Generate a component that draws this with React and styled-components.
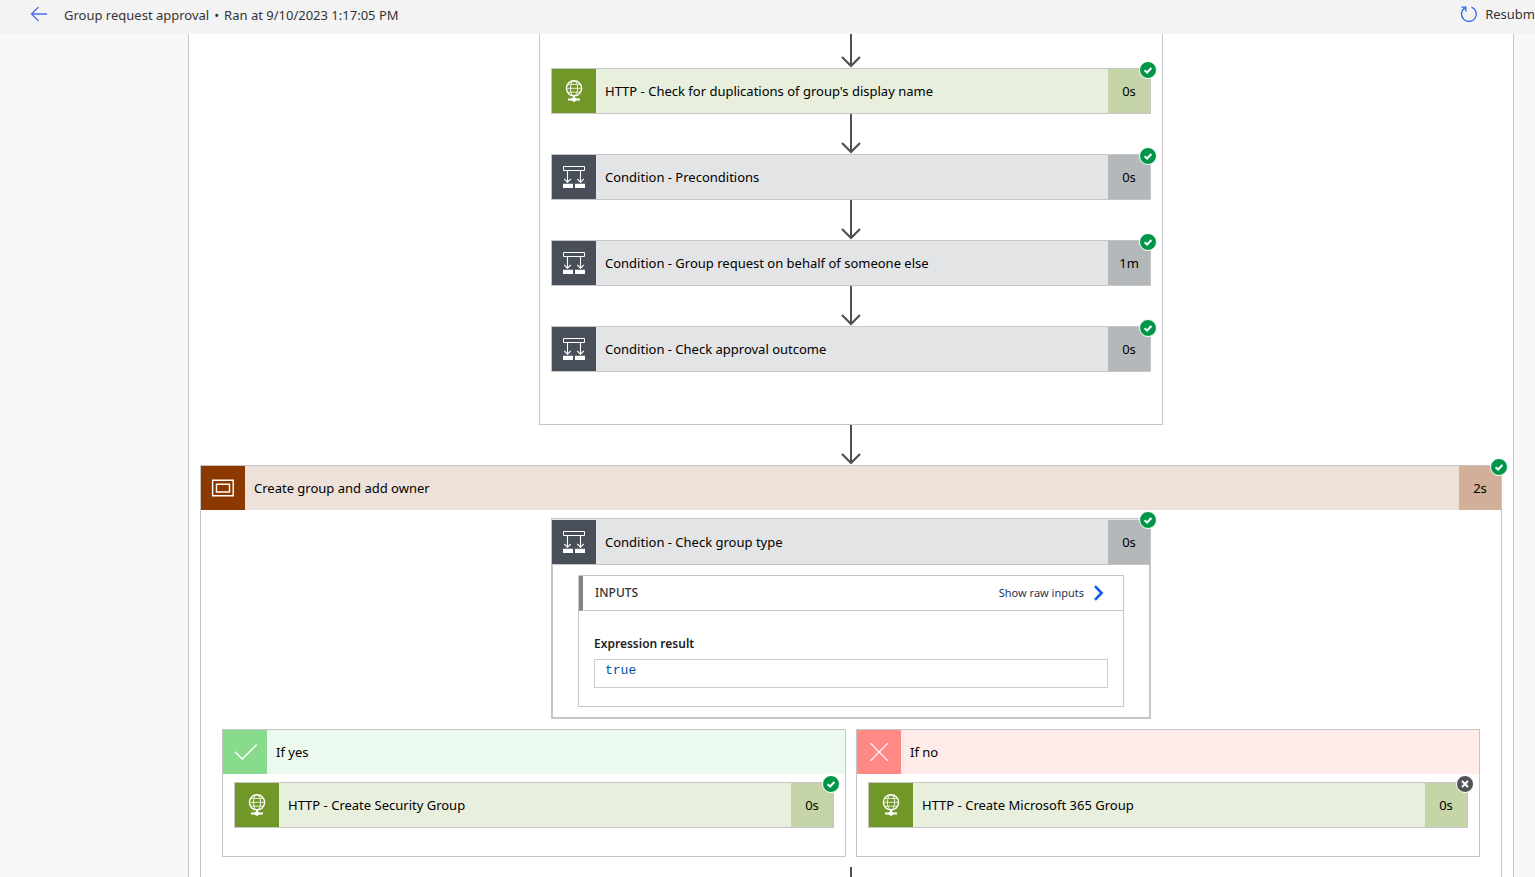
import React from "react";
import styled, { createGlobalStyle } from "styled-components";

const GlobalStyle = createGlobalStyle`
  *, *::before, *::after { box-sizing: border-box; }
  body {
    margin: 0;
    background: #f8f8f8;
    color: #000;
    font: 13px/20px "Noto Sans", "Open Sans", sans-serif;
  }
  button, input { font: inherit; color: inherit; }
`;

const LINE = "#c6c6c6";

const tones = {
  http: { tile: "#709727", bar: "#e8efdd", time: "#c6d5a8" },
  condition: { tile: "#484f58", bar: "#e3e4e6", time: "#b4b8bb" },
  scope: { tile: "#8c3900", bar: "#eee1d9", time: "#d1af98" },
  yes: { tile: "#88da8d", bar: "#ecf9ee" },
  no: { tile: "#ff8984", bar: "#ffecea" },
};

const Page = styled.div`
  display: flex;
  flex-direction: column;
  height: 100vh;
  overflow: hidden;
`;

const TopBar = styled.header`
  flex: none;
  display: flex;
  align-items: center;
  justify-content: space-between;
  height: 34px;
  padding: 0 0 6px 30px;
  background: #f3f3f3;
  color: #333;
`;

const RunInfo = styled.div`
  display: flex;
  align-items: center;
  gap: 16px;
`;

const RunTitle = styled.h1`
  display: flex;
  gap: 5px;
  margin: 0;
  padding-top: 2px;
  font-size: 13px;
  font-weight: 400;
  white-space: nowrap;
`;

const BarButton = styled.button`
  display: flex;
  align-items: center;
  gap: 7px;
  padding: 0;
  border: 0;
  background: none;
`;

const Main = styled.main`
  flex: 1;
  min-height: 0;
  display: flex;
  overflow: hidden;
  padding: 0 21px 0 188px;
`;

const Canvas = styled.div`
  flex: 1;
  display: flex;
  flex-direction: column;
  align-items: center;
  padding: 0 11px;
  border: solid ${LINE};
  border-width: 0 1px;
  background: #fff;
`;

const StepGroup = styled.section`
  flex: none;
  display: flex;
  flex-direction: column;
  align-items: center;
  width: 100%;
  max-width: 624px;
  padding: 0 11px 52px;
  border: solid ${LINE};
  border-width: 0 1px 1px;
`;

const Scope = styled.section`
  position: relative;
  flex: none;
  display: flex;
  flex-direction: column;
  align-items: center;
  width: 100%;
  border: solid ${LINE};
  border-width: 1px 1px 0;
`;

const ScopeBody = styled.div`
  display: flex;
  flex-direction: column;
  align-items: center;
  width: 100%;
  padding: 8px 21px 0;
`;

const Card = styled.article`
  position: relative;
  width: 100%;
  max-width: 600px;
  border: 1px solid ${LINE};
`;

const Head = styled.button`
  display: flex;
  align-items: stretch;
  width: 100%;
  padding: ${(p) => (p.$open ? "1px 0 0" : "0")};
  border: 0;
  background: ${(p) => tones[p.$tone].bar};
  text-align: left;
`;

const Tile = styled.span`
  flex: none;
  display: block;
  width: 44px;
  height: 44px;
  background: ${(p) => tones[p.$tone].tile};

  svg { display: block; }
`;

const Name = styled.span`
  flex: 1;
  align-self: center;
  padding-left: 9px;
`;

const Duration = styled.span`
  display: flex;
  align-items: center;
  justify-content: center;
  width: 42px;
  background: ${(p) => tones[p.$tone].time};
`;

const Badge = styled.span`
  position: absolute;
  top: -8px;
  right: -7px;
  width: 18px;
  height: 18px;
  border: 1px solid #fff;
  border-radius: 50%;
  background: ${(p) => (p.$skipped ? "#505256" : "#009647")};

  svg { display: block; }
`;

const CardBody = styled.div`
  padding: 10px 25px;
  border: 1px solid ${LINE};
  background: #fff;
`;

const Panel = styled.section`
  border: 1px solid ${LINE};
`;

const PanelHead = styled.div`
  display: flex;
  align-items: center;
  justify-content: space-between;
  height: 35px;
  padding: 0 18px 0 12px;
  border-left: 4px solid #7f8388;
  border-bottom: 1px solid ${LINE};
`;

const PanelTitle = styled.h2`
  margin: 0;
  color: #333;
  font-size: 12px;
  font-weight: 500;
`;

const RawLink = styled.a`
  display: flex;
  align-items: center;
  gap: 9px;
  color: #1f3152;
  font-size: 11px;
  text-decoration: none;
`;

const Field = styled.div`
  display: flex;
  flex-direction: column;
  gap: 5px;
  padding: 23px 15px 18px;
`;

const FieldLabel = styled.label`
  color: #222;
  font-size: 12px;
  font-weight: 600;
`;

const FieldValue = styled.input`
  width: 100%;
  height: 29px;
  padding: 0 10px 6px;
  border: 1px solid #ccc;
  background: #fffffd;
  color: #0451a5;
  font: 13px "Liberation Mono", monospace;
`;

const Branches = styled.div`
  display: flex;
  justify-content: center;
  gap: 10px;
  width: 100%;
  padding: 10px 0;
`;

const Branch = styled.section`
  flex: 1;
  max-width: 624px;
  border: 1px solid ${LINE};
`;

const BranchBody = styled.div`
  padding: 8px 11px 28px;
`;

const ConnectorSvg = styled.svg`
  flex: none;
  display: block;
`;

function Connector({ height = 40 }) {
  return (
    <ConnectorSvg width="20" height={height} fill="none" stroke="#505050" strokeWidth="2.2" aria-hidden="true">
      <path d={`M10 0V${height - 2}`} strokeWidth="2" />
      <path d={`M1 ${height - 11}L10 ${height - 2}L19 ${height - 11}`} />
    </ConnectorSvg>
  );
}

const glyphs = {
  http: (
    <>
      <circle cx="22" cy="19.3" r="7.6" strokeWidth="1.5" />
      <ellipse cx="22" cy="19.3" rx="3.6" ry="7.6" strokeWidth="0.9" />
      <path d="M14.6 19.3H29.4M16 15.4H28M16 23.2H28" strokeWidth="0.8" />
      <path d="M22 27V30" strokeWidth="2" />
      <path d="M16 30.5H28" strokeWidth="2" />
      <path d="M19.5 29H24.5V31.6L22 33L19.5 31.6Z" fill="#fff" stroke="none" />
    </>
  ),
  condition: (
    <>
      <path d="M11.5 11.5H32.5V15.5H11.5Z" />
      <path d="M15.5 16V27.5M12.3 24L15.5 27.3L18.7 24M28.5 16V27.5M25.3 24L28.5 27.3L31.7 24" strokeWidth="1.1" />
      <path d="M11 28.7H21V33H11ZM23 28.7H33V33H23Z" fill="#fff" stroke="none" />
    </>
  ),
  scope: (
    <>
      <path d="M11.6 14.2H32.2V29.8H11.6Z" strokeWidth="1.4" />
      <path d="M15.5 18.3H28.5V26H15.5Z" strokeWidth="1.4" />
    </>
  ),
  yes: <path d="M12 21.8L19.3 29L33.7 14.5" strokeWidth="1.4" />,
  no: <path d="M13.4 13.2L31 30.8M31 13.2L13.4 30.8" strokeWidth="1.2" />,
};

function Glyph({ tone }) {
  return (
    <Tile $tone={tone}>
      <svg width="44" height="44" fill="none" stroke="#fff" aria-hidden="true">
        {glyphs[tone]}
      </svg>
    </Tile>
  );
}

function Status({ skipped }) {
  return (
    <Badge $skipped={skipped} role="img" aria-label={skipped ? "Skipped" : "Succeeded"}>
      <svg width="16" height="16" fill="none" stroke="#fff" strokeWidth="2">
        <path d={skipped ? "M5 5L11 11M11 5L5 11" : "M4.6 8.2L7.1 10.5L11.4 6"} />
      </svg>
    </Badge>
  );
}

function StepHead({ tone, name, time, skipped, open }) {
  return (
    <>
      <Head type="button" $tone={tone} $open={open}>
        <Glyph tone={tone} />
        <Name>{name}</Name>
        {time && <Duration $tone={tone}>{time}</Duration>}
      </Head>
      {time && <Status skipped={skipped} />}
    </>
  );
}

function Step({ children, ...head }) {
  return (
    <Card>
      <StepHead {...head} open={Boolean(children)} />
      {children && <CardBody>{children}</CardBody>}
    </Card>
  );
}

const steps = [
  { tone: "http", name: "HTTP - Check for duplications of group's display name", time: "0s" },
  { tone: "condition", name: "Condition - Preconditions", time: "0s" },
  { tone: "condition", name: "Condition - Group request on behalf of someone else", time: "1m" },
  { tone: "condition", name: "Condition - Check approval outcome", time: "0s" },
];

export default function App() {
  return (
    <>
      <GlobalStyle />
      <Page>
        <TopBar>
          <RunInfo>
            <BarButton type="button" aria-label="Back">
              <svg width="18" height="18" fill="none" stroke="#4f6bed" strokeWidth="1.3">
                <path d="M17 9H1.5M8.5 2L1.5 9L8.5 16" />
              </svg>
            </BarButton>
            <RunTitle>
              <span>Group request approval</span>
              <span>•</span>
              <span>Ran at 9/10/2023 1:17:05 PM</span>
            </RunTitle>
          </RunInfo>
          <BarButton type="button">
            <svg width="18" height="18" fill="none" stroke="#2266e3" strokeWidth="1.3">
              <path d="M11.5 2.1A7.4 7.4 0 1 1 4.8 2.9" />
              <path d="M1.5 2.2H5.8V6.5" />
            </svg>
            Resubm
          </BarButton>
        </TopBar>
        <Main>
          <Canvas>
            <StepGroup>
              {steps.map((step, i) => (
                <React.Fragment key={step.name}>
                  <Connector height={i === 0 ? 34 : 40} />
                  <Step {...step} />
                </React.Fragment>
              ))}
            </StepGroup>
            <Connector />
            <Scope>
              <StepHead tone="scope" name="Create group and add owner" time="2s" />
              <ScopeBody>
                <Step tone="condition" name="Condition - Check group type" time="0s">
                  <Panel>
                    <PanelHead>
                      <PanelTitle>INPUTS</PanelTitle>
                      <RawLink href="#raw-inputs">
                        Show raw inputs
                        <svg width="12" height="16" fill="none" stroke="#0f5be8" strokeWidth="2.6">
                          <path d="M2 1.2L8.6 8L2 14.8" />
                        </svg>
                      </RawLink>
                    </PanelHead>
                    <Field>
                      <FieldLabel htmlFor="expression-result">Expression result</FieldLabel>
                      <FieldValue id="expression-result" readOnly value="true" />
                    </Field>
                  </Panel>
                </Step>
                <Branches>
                  <Branch>
                    <StepHead tone="yes" name="If yes" />
                    <BranchBody>
                      <Step tone="http" name="HTTP - Create Security Group" time="0s" />
                    </BranchBody>
                  </Branch>
                  <Branch>
                    <StepHead tone="no" name="If no" />
                    <BranchBody>
                      <Step tone="http" name="HTTP - Create Microsoft 365 Group" time="0s" skipped />
                    </BranchBody>
                  </Branch>
                </Branches>
                <Connector />
              </ScopeBody>
            </Scope>
          </Canvas>
        </Main>
      </Page>
    </>
  );
}
